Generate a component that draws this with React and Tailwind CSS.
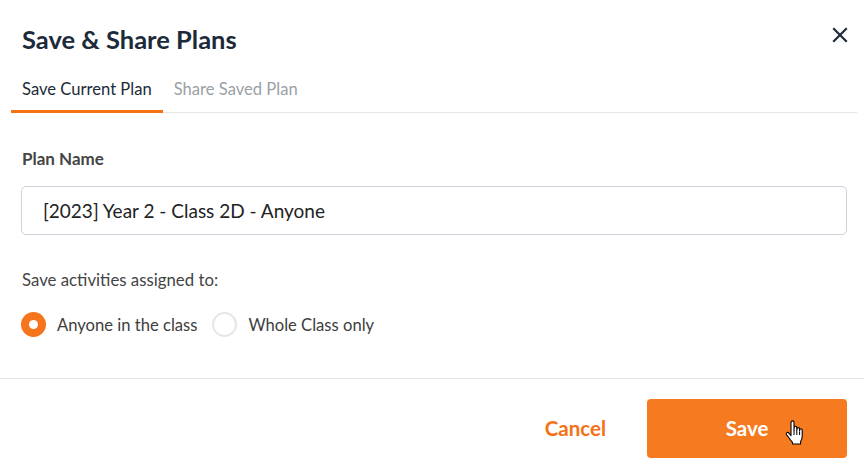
import React, { useState } from "react";

const HandCursor = () => (
  <svg width="20" height="26" viewBox="0 0 20 26" className="absolute left-[785px] top-[420px] pointer-events-none">
    <path
      d="M6 2.5c0-1 .7-1.6 1.5-1.6S9 1.5 9 2.5V10l.2-2.4c0-.9.6-1.4 1.3-1.4s1.3.5 1.3 1.4V10.5l.2-1.6c0-.8.6-1.3 1.3-1.3s1.3.5 1.3 1.3v2l.2-1c0-.7.5-1.2 1.2-1.2s1.2.5 1.2 1.2v6.3c0 2.6-.8 4-1.6 5.3V24H7.5v-1.6c-1.2-1.2-2.4-2.8-3.6-4.6L1.6 14.6c-.5-.8-.3-1.6.3-2 .6-.4 1.5-.2 2 .5L6 15.6V2.5z"
      fill="#fff"
      stroke="#000"
      strokeWidth="1.1"
      strokeLinejoin="round"
    />
    <path d="M9 10v5M11.8 10.5v4.5M14.6 11.5v3.5" stroke="#000" strokeWidth="1" />
  </svg>
);

const Radio = ({ checked, label, onClick }) => (
  <button type="button" onClick={onClick} className="flex items-center gap-[11px]">
    {checked ? (
      <span className="flex h-[25px] w-[25px] items-center justify-center rounded-full bg-[#f5741c]">
        <span className="h-[9px] w-[9px] rounded-full bg-white" />
      </span>
    ) : (
      <span className="h-[25px] w-[25px] rounded-full border-2 border-[#e6e6e6] bg-white" />
    )}
    <span className="text-[16.6px] leading-[24px] text-[#3d3d3d]">{label}</span>
  </button>
);

export default function App() {
  const [tab, setTab] = useState(0);
  const [who, setWho] = useState("anyone");

  return (
    <div className="relative h-[474px] w-[864px] bg-white font-['Lato',sans-serif] text-[#1c2a39]">
      {/* Header */}
      <div className="flex items-start justify-between pl-[22px] pr-[12px] pt-[25px]">
        <h1 className="text-[25.5px] font-bold leading-[28px] text-[#1c2a39]">Save &amp; Share Plans</h1>
        <button type="button" className="mt-[-2px] p-1 text-[#1c2a39]">
          <svg width="16" height="16" viewBox="0 0 16 16">
            <path d="M2 2l12 12M14 2L2 14" stroke="currentColor" strokeWidth="2.2" strokeLinecap="square" />
          </svg>
        </button>
      </div>

      {/* Tabs */}
      <div className="ml-[11px] mr-[7px] mt-[24px] flex border-b border-[#e6e6e6]">
        {["Save Current Plan", "Share Saved Plan"].map((t, i) => (
          <button
            key={t}
            type="button"
            onClick={() => setTab(i)}
            className={
              "mb-[-1px] px-[11px] pb-[9px] text-[16.6px] leading-[24px] " +
              (tab === i ? "border-b-[3px] border-[#f57116] text-[#1c2a39]" : "border-b-[3px] border-transparent text-[#9aa0a6]")
            }
          >
            {t}
          </button>
        ))}
      </div>

      {/* Body */}
      <div className="pl-[21px] pr-[17px] pt-[34px]">
        <label className="block pl-[1px] text-[17px] font-bold leading-[24px] text-[#444]">Plan Name</label>
        <input
          defaultValue="[2023] Year 2 - Class 2D - Anyone"
          className="mt-[15px] h-[49px] w-full rounded-[5px] border border-[#cdd2da] px-[21px] text-[19px] text-[#222] outline-none"
        />
        <p className="mt-[33px] pl-[1px] text-[16.8px] leading-[24px] text-[#444]">Save activities assigned to:</p>
        <div className="mt-[20px] flex items-center gap-[15px]">
          <Radio checked={who === "anyone"} label="Anyone in the class" onClick={() => setWho("anyone")} />
          <Radio checked={who === "whole"} label="Whole Class only" onClick={() => setWho("whole")} />
        </div>
      </div>

      {/* Footer */}
      <div className="mt-[41px] flex items-center justify-end gap-[41px] border-t border-[#e1e5ea] pr-[17px] pt-[20px]">
        <button type="button" className="text-[20.5px] font-bold text-[#f57116]">Cancel</button>
        <button type="button" className="h-[59px] w-[200px] rounded-[4px] bg-[#f57a20] text-[20.5px] font-bold text-white">
          Save
        </button>
      </div>

      <HandCursor />
    </div>
  );
}
